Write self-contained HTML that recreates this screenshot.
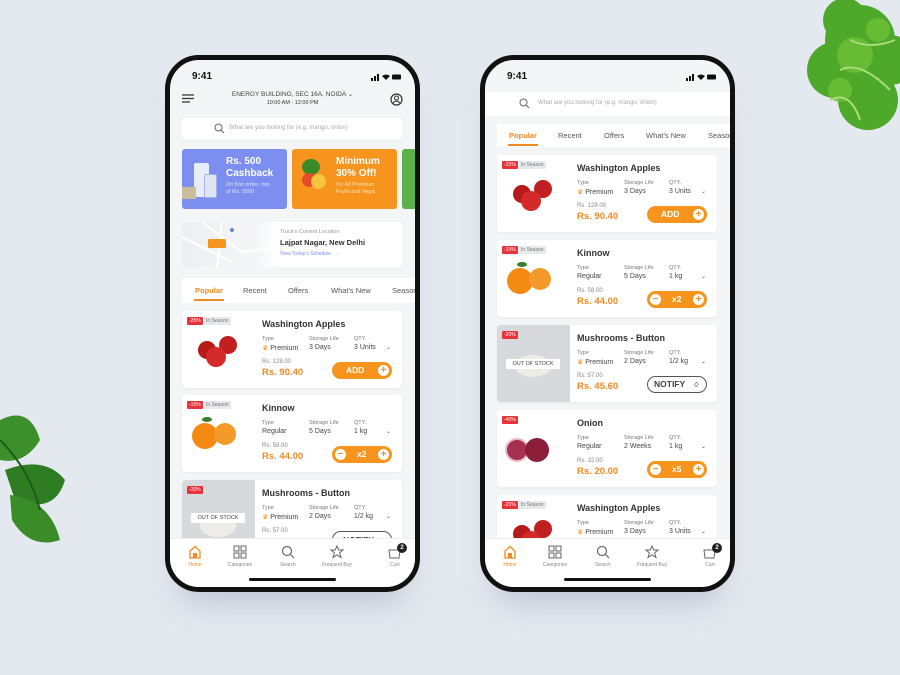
<!DOCTYPE html>
<html><head><meta charset="utf-8"><style>
*{margin:0;padding:0;box-sizing:border-box}
body{width:900px;height:675px;background:#e4e8ef;position:relative;overflow:hidden;font-family:"Liberation Sans",sans-serif;color:#333}
.ab{position:absolute}
.phone{position:absolute;top:55px;width:255px;height:537px;border:5px solid #111;border-radius:34px;background:#f4f5f7;overflow:hidden;box-shadow:0 25px 30px -15px rgba(120,130,160,.35)}
.time{position:absolute;left:22px;top:11px;font-size:10px;font-weight:bold;color:#111}
.stat{position:absolute;right:14px;top:13px;display:flex;gap:3px;align-items:flex-end}
.card{position:absolute;left:12px;width:220px;height:77px;background:#fff;border-radius:4px;box-shadow:0 1px 3px rgba(0,0,0,.05);overflow:hidden}
.bd{position:absolute;top:6px;height:8px;font-size:5px;line-height:8px;padding:0 2px;border-radius:1px}
.red{background:#e8333a;color:#fff;left:5px}
.gr{background:#e6e8ec;color:#777;left:22px}
.tt{position:absolute;left:80px;top:8px;font-size:9px;font-weight:bold;color:#333}
.lb{position:absolute;top:25px;font-size:5.5px;color:#777}
.vl{position:absolute;top:33px;font-size:7px;color:#444}
.op{position:absolute;left:80px;top:48px;font-size:6px;color:#888}
.np{position:absolute;left:80px;top:56px;font-size:9.5px;font-weight:bold;color:#f08a24}
.btn{position:absolute;left:150px;top:51px;width:60px;height:17px;border-radius:9px;background:#f7941d;color:#fff;font-size:8.5px;font-weight:bold;line-height:17px}
.pl{position:absolute;top:2px;width:13px;height:13px;border-radius:50%;background:#fff;color:#f7941d;font-size:10px;line-height:12px;text-align:center;border:1px solid #f7941d}
.chev{position:absolute;left:204px;top:33px;font-size:6px;color:#555}
.ball{position:absolute;border-radius:50%}
.nav{position:absolute;left:0;top:478px;width:245px;height:50px;background:#fff;border-top:1px solid #eee}
.ni{position:absolute;top:6px;width:40px;text-align:center;font-size:5px;color:#888}
.ni svg{display:block;margin:0 auto 3px}
.hb{position:absolute;left:79px;top:39px;width:87px;height:3px;border-radius:2px;background:#111}
.tabs{position:absolute;left:12px;background:#fff;height:25px;width:240px;font-size:7.5px;color:#555}
.tabs span{position:absolute;top:8px}
</style></head><body>

<!-- lettuce -->
<svg class="ab" style="left:800px;top:0" width="100" height="140"><g fill="#4ea82a"><circle cx="60" cy="40" r="35"/><circle cx="35" cy="70" r="28"/><circle cx="68" cy="100" r="30"/><circle cx="90" cy="60" r="25"/><circle cx="45" cy="20" r="22"/></g><g fill="#6ec236" opacity=".8"><circle cx="55" cy="55" r="18"/><circle cx="78" cy="30" r="12"/><circle cx="40" cy="90" r="12"/></g><path d="M40 70 Q60 60 90 90 M50 40 Q70 50 95 40 M30 100 Q50 90 60 120" stroke="#a8dc7a" stroke-width="2" fill="none"/></svg>
<!-- basil -->
<svg class="ab" style="left:0;top:400px" width="75" height="150"><path d="M0 20 Q30 5 40 40 Q25 65 0 60Z" fill="#3c8f2a"/><path d="M5 70 Q45 55 65 80 Q55 115 15 100Z" fill="#2f7d22"/><path d="M10 95 Q50 100 60 140 Q30 150 12 120Z" fill="#3a8c28"/><path d="M0 40 Q30 70 40 110" stroke="#1f5a18" stroke-width="2" fill="none"/></svg>

<!-- LEFT PHONE -->
<div class="phone" style="left:165px">
 <div class="time">9:41</div>
 <div class="stat"><svg width="30" height="8"><rect x="0" y="5" width="2" height="3" fill="#111"/><rect x="3" y="3" width="2" height="5" fill="#111"/><rect x="6" y="1" width="2" height="7" fill="#111"/><path d="M11 3 Q15 0 19 3 L15 7Z" fill="#111"/><rect x="21" y="1.5" width="9" height="5" rx="1" fill="#111"/></svg></div>
 <svg class="ab" style="left:12px;top:34px" width="12" height="9"><path d="M0 1H12M0 4.5H12M0 8H8" stroke="#333" stroke-width="1.3"/></svg>
 <div class="ab" style="left:0;width:245px;top:30px;text-align:center;font-size:6.5px;color:#444">ENERGY BUILDING, SEC 16A, NOIDA ⌄</div>
 <div class="ab" style="left:0;width:245px;top:40px;text-align:center;font-size:5.5px;color:#333">10:00 AM - 12:00 PM</div>
 <svg class="ab" style="left:220px;top:33px" width="13" height="13"><circle cx="6.5" cy="6.5" r="5.5" fill="none" stroke="#333" stroke-width="1.2"/><circle cx="6.5" cy="5" r="2" fill="none" stroke="#333"/><path d="M3 10Q6.5 6 10 10" fill="none" stroke="#333"/></svg>
 <div class="ab" style="left:12px;top:58px;width:220px;height:21px;background:#fff;border-radius:3px"></div>
 <svg class="ab" style="left:44px;top:63px" width="11" height="11"><circle cx="4.5" cy="4.5" r="3.5" fill="none" stroke="#666"/><path d="M7 7L10 10" stroke="#666"/></svg>
 <div class="ab" style="left:59px;top:65px;font-size:6px;color:#aaa">What are you looking for (e.g. mango, onion)</div>
 <div class="ab" style="left:12px;top:89px;width:105px;height:60px;background:#7c8ff0;border-radius:3px;overflow:hidden">
  <div class="ab" style="left:12px;top:14px;width:15px;height:34px;background:#e8ebf8;border-radius:2px"></div>
  <div class="ab" style="left:22px;top:25px;width:13px;height:24px;background:#dfe5f5;border:1px solid #a8b4e6;border-radius:2px"></div>
  <div class="ab" style="left:0;top:38px;width:14px;height:12px;background:#cbbd9a"></div>
  <div class="ab" style="left:44px;top:7px;font-size:10px;font-weight:bold;color:#fff;line-height:12px">Rs. 500<br>Cashback</div>
  <div class="ab" style="left:44px;top:33px;font-size:5.5px;color:#dfe3ff;line-height:7px">On first order, min<br>of Rs. 2500</div>
 </div>
 <div class="ab" style="left:122px;top:89px;width:105px;height:60px;background:#f7941d;border-radius:3px;overflow:hidden">
  <div class="ball" style="left:10px;top:10px;width:18px;height:16px;background:#3b8a2a"></div>
  <div class="ball" style="left:10px;top:24px;width:14px;height:14px;background:#e54b2b"></div>
  <div class="ball" style="left:19px;top:25px;width:15px;height:15px;background:#f6c53b"></div>
  <div class="ab" style="left:44px;top:7px;font-size:10px;font-weight:bold;color:#fff;line-height:12px">Minimum<br>30% Off!</div>
  <div class="ab" style="left:44px;top:33px;font-size:5.5px;color:#ffe0b8;line-height:7px">On All Premium<br>Fruits and Vegis</div>
 </div>
 <div class="ab" style="left:232px;top:89px;width:20px;height:60px;background:#59b34a;border-radius:3px"></div>
 <div class="ab" style="left:12px;top:162px;width:220px;height:45px;background:#fff;border-radius:3px;overflow:hidden">
  <div class="ab" style="left:0;top:0;width:95px;height:45px;background:linear-gradient(90deg,#eceef1,#f5f6f8 80%,#fff)"></div>
  <svg class="ab" style="left:0;top:0" width="95" height="45"><path d="M20 0 L60 30 L95 25 M0 15 L50 40 M40 0 L35 45" stroke="#fff" stroke-width="2" fill="none"/><circle cx="50" cy="8" r="2" fill="#6a7fd0"/></svg>
  <div class="ab" style="left:26px;top:17px;width:18px;height:9px;background:#f7941d;border-radius:1px"></div>
  <div class="ab" style="left:98px;top:7px;font-size:5.5px;color:#999">Truck's Current Location</div>
  <div class="ab" style="left:98px;top:16px;font-size:7.5px;font-weight:bold;color:#333">Lajpat Nagar, New Delhi</div>
  <div class="ab" style="left:98px;top:29px;font-size:5px;color:#7c8ff0">View Today's Schedule &nbsp;→</div>
 </div>
 <div class="tabs" style="top:218px"><span style="left:13px;color:#f08a24;font-weight:bold">Popular</span><span style="left:61px">Recent</span><span style="left:106px">Offers</span><span style="left:149px">What's New</span><span style="left:210px">Seasonal</span><div class="ab" style="left:12px;top:21px;width:30px;height:2px;background:#f08a24"></div></div>

 <div class="card" style="top:251px">
  <div class="bd red">-25%</div><div class="bd gr">In Season</div>
  <div class="ball" style="left:16px;top:30px;width:18px;height:18px;background:#b81a1a"></div><div class="ball" style="left:37px;top:25px;width:18px;height:18px;background:#c0201f"></div><div class="ball" style="left:24px;top:36px;width:20px;height:20px;background:#d42a2a"></div>
  <div class="tt">Washington Apples</div>
  <div class="lb" style="left:80px">Type</div><div class="lb" style="left:127px">Storage Life</div><div class="lb" style="left:172px">QTY.</div>
  <div class="vl" style="left:80px"><span style="color:#f7941d">♛</span> Premium</div><div class="vl" style="left:127px">3 Days</div><div class="vl" style="left:172px">3 Units</div><div class="chev">⌄</div>
  <div class="op">Rs. 128.00</div><div class="np">Rs. 90.40</div>
  <div class="btn"><span style="margin-left:14px">ADD</span><div class="pl" style="right:2px">+</div></div>
 </div>
 <div class="card" style="top:335px">
  <div class="bd red">-15%</div><div class="bd gr">In Season</div>
  <div class="ball" style="left:10px;top:28px;width:26px;height:26px;background:#f48a12"></div><div class="ball" style="left:32px;top:28px;width:22px;height:22px;background:#f49a2a"></div><div class="ab" style="left:20px;top:22px;width:10px;height:5px;background:#3a7f2a;border-radius:50%"></div>
  <div class="tt">Kinnow</div>
  <div class="lb" style="left:80px">Type</div><div class="lb" style="left:127px">Storage Life</div><div class="lb" style="left:172px">QTY.</div>
  <div class="vl" style="left:80px">Regular</div><div class="vl" style="left:127px">5 Days</div><div class="vl" style="left:172px">1 kg</div><div class="chev">⌄</div>
  <div class="op">Rs. 58.00</div><div class="np">Rs. 44.00</div>
  <div class="btn"><div class="pl" style="left:2px">−</div><span style="margin-left:25px">x2</span><div class="pl" style="right:2px">+</div></div>
 </div>
 <div class="card" style="top:420px">
  <div class="ab" style="left:0;top:0;width:73px;height:77px;background:#d8d9dc"></div>
  <div class="ball" style="left:18px;top:35px;width:36px;height:22px;background:#eeece6"></div>
  <div class="bd red">-20%</div>
  <div class="ab" style="left:9px;top:33px;width:54px;height:10px;background:#fff;font-size:5.5px;text-align:center;line-height:10px;color:#444;border-radius:1px">OUT OF STOCK</div>
  <div class="tt">Mushrooms - Button</div>
  <div class="lb" style="left:80px">Type</div><div class="lb" style="left:127px">Storage Life</div><div class="lb" style="left:172px">QTY.</div>
  <div class="vl" style="left:80px"><span style="color:#f7941d">♛</span> Premium</div><div class="vl" style="left:127px">2 Days</div><div class="vl" style="left:172px">1/2 kg</div><div class="chev">⌄</div>
  <div class="op">Rs. 57.00</div>
  <div class="btn" style="background:#fff;border:1px solid #555;color:#444;padding-left:10px">NOTIFY</div>
 </div>
 <div class="nav">
  <div class="ni" style="left:5px;color:#f08a24"><svg width="14" height="14"><path d="M2 6L7 1.5L12 6V13H2Z" fill="none" stroke="#f08a24" stroke-width="1.3"/><rect x="5" y="8" width="4" height="5" fill="#f08a24"/></svg>Home</div>
  <div class="ni" style="left:50px"><svg width="14" height="14"><g fill="none" stroke="#666"><rect x="1" y="1" width="5" height="5"/><rect x="8" y="1" width="5" height="5"/><rect x="1" y="8" width="5" height="5"/><rect x="8" y="8" width="5" height="5"/></g></svg>Categories</div>
  <div class="ni" style="left:98px"><svg width="14" height="14"><circle cx="6" cy="6" r="4.5" fill="none" stroke="#666" stroke-width="1.2"/><path d="M9.5 9.5L13 13" stroke="#666" stroke-width="1.2"/></svg>Search</div>
  <div class="ni" style="left:147px"><svg width="14" height="14"><path d="M7 1L8.8 5H13L9.6 7.8L11 12.5L7 9.8L3 12.5L4.4 7.8L1 5H5.2Z" fill="none" stroke="#666"/></svg>Frequent Buy</div>
  <div class="ni" style="left:205px"><svg width="14" height="14"><path d="M1 5H12L11 13H2Z" fill="none" stroke="#666"/></svg>Cart</div>
  <div class="ab" style="left:227px;top:4px;width:10px;height:10px;border-radius:50%;background:#222;color:#fff;font-size:6px;text-align:center;line-height:10px;font-weight:bold">2</div>
  <div class="hb"></div>
 </div>
</div>

<!-- RIGHT PHONE -->
<div class="phone" style="left:480px">
 <div class="time">9:41</div>
 <div class="stat"><svg width="30" height="8"><rect x="0" y="5" width="2" height="3" fill="#111"/><rect x="3" y="3" width="2" height="5" fill="#111"/><rect x="6" y="1" width="2" height="7" fill="#111"/><path d="M11 3 Q15 0 19 3 L15 7Z" fill="#111"/><rect x="21" y="1.5" width="9" height="5" rx="1" fill="#111"/></svg></div>
 <div class="ab" style="left:0;top:32px;width:245px;height:24px;background:#fff"></div>
 <svg class="ab" style="left:34px;top:38px" width="11" height="11"><circle cx="4.5" cy="4.5" r="3.5" fill="none" stroke="#666"/><path d="M7 7L10 10" stroke="#666"/></svg>
 <div class="ab" style="left:53px;top:40px;font-size:6px;color:#aaa">What are you looking for (e.g. mango, onion)</div>
 <div class="tabs" style="top:64px;height:23px"><span style="left:12px;color:#f08a24;font-weight:bold;top:7px">Popular</span><span style="left:61px;top:7px">Recent</span><span style="left:107px;top:7px">Offers</span><span style="left:149px;top:7px">What's New</span><span style="left:211px;top:7px">Seasonal</span><div class="ab" style="left:11px;top:20px;width:30px;height:2px;background:#f08a24"></div></div>

 <div class="card" style="top:95px">
  <div class="bd red">-25%</div><div class="bd gr">In Season</div>
  <div class="ball" style="left:16px;top:30px;width:18px;height:18px;background:#b81a1a"></div><div class="ball" style="left:37px;top:25px;width:18px;height:18px;background:#c0201f"></div><div class="ball" style="left:24px;top:36px;width:20px;height:20px;background:#d42a2a"></div>
  <div class="tt">Washington Apples</div>
  <div class="lb" style="left:80px">Type</div><div class="lb" style="left:127px">Storage Life</div><div class="lb" style="left:172px">QTY.</div>
  <div class="vl" style="left:80px"><span style="color:#f7941d">♛</span> Premium</div><div class="vl" style="left:127px">3 Days</div><div class="vl" style="left:172px">3 Units</div><div class="chev">⌄</div>
  <div class="op">Rs. 128.00</div><div class="np">Rs. 90.40</div>
  <div class="btn"><span style="margin-left:14px">ADD</span><div class="pl" style="right:2px">+</div></div>
 </div>
 <div class="card" style="top:180px">
  <div class="bd red">-15%</div><div class="bd gr">In Season</div>
  <div class="ball" style="left:10px;top:28px;width:26px;height:26px;background:#f48a12"></div><div class="ball" style="left:32px;top:28px;width:22px;height:22px;background:#f49a2a"></div><div class="ab" style="left:20px;top:22px;width:10px;height:5px;background:#3a7f2a;border-radius:50%"></div>
  <div class="tt">Kinnow</div>
  <div class="lb" style="left:80px">Type</div><div class="lb" style="left:127px">Storage Life</div><div class="lb" style="left:172px">QTY.</div>
  <div class="vl" style="left:80px">Regular</div><div class="vl" style="left:127px">5 Days</div><div class="vl" style="left:172px">1 kg</div><div class="chev">⌄</div>
  <div class="op">Rs. 58.00</div><div class="np">Rs. 44.00</div>
  <div class="btn"><div class="pl" style="left:2px">−</div><span style="margin-left:25px">x2</span><div class="pl" style="right:2px">+</div></div>
 </div>
 <div class="card" style="top:265px">
  <div class="ab" style="left:0;top:0;width:73px;height:77px;background:#d8d9dc"></div>
  <div class="ball" style="left:18px;top:30px;width:36px;height:22px;background:#eeece6"></div>
  <div class="bd red">-20%</div>
  <div class="ab" style="left:9px;top:34px;width:54px;height:10px;background:#fff;font-size:5.5px;text-align:center;line-height:10px;color:#444;border-radius:1px">OUT OF STOCK</div>
  <div class="tt">Mushrooms - Button</div>
  <div class="lb" style="left:80px">Type</div><div class="lb" style="left:127px">Storage Life</div><div class="lb" style="left:172px">QTY.</div>
  <div class="vl" style="left:80px"><span style="color:#f7941d">♛</span> Premium</div><div class="vl" style="left:127px">2 Days</div><div class="vl" style="left:172px">1/2 kg</div><div class="chev">⌄</div>
  <div class="op">Rs. 57.00</div><div class="np">Rs. 45.60</div>
  <div class="btn" style="background:#fff;border:1px solid #555;color:#444;line-height:15px;padding-left:6px">NOTIFY <span style="font-size:7px;margin-left:6px">♢</span></div>
 </div>
 <div class="card" style="top:350px">
  <div class="bd red">-40%</div>
  <div class="ball" style="left:8px;top:28px;width:24px;height:24px;background:#a5304f;border:2px solid #e9b8c8"></div><div class="ball" style="left:28px;top:28px;width:24px;height:24px;background:#8c1e3a"></div>
  <div class="tt">Onion</div>
  <div class="lb" style="left:80px">Type</div><div class="lb" style="left:127px">Storage Life</div><div class="lb" style="left:172px">QTY.</div>
  <div class="vl" style="left:80px">Regular</div><div class="vl" style="left:127px">2 Weeks</div><div class="vl" style="left:172px">1 kg</div><div class="chev">⌄</div>
  <div class="op">Rs. 32.00</div><div class="np">Rs. 20.00</div>
  <div class="btn"><div class="pl" style="left:2px">−</div><span style="margin-left:25px">x5</span><div class="pl" style="right:2px">+</div></div>
 </div>
 <div class="card" style="top:435px">
  <div class="bd red">-25%</div><div class="bd gr">In Season</div>
  <div class="ball" style="left:16px;top:30px;width:18px;height:18px;background:#b81a1a"></div><div class="ball" style="left:37px;top:25px;width:18px;height:18px;background:#c0201f"></div><div class="ball" style="left:24px;top:36px;width:20px;height:20px;background:#d42a2a"></div>
  <div class="tt">Washington Apples</div>
  <div class="lb" style="left:80px">Type</div><div class="lb" style="left:127px">Storage Life</div><div class="lb" style="left:172px">QTY.</div>
  <div class="vl" style="left:80px"><span style="color:#f7941d">♛</span> Premium</div><div class="vl" style="left:127px">3 Days</div><div class="vl" style="left:172px">3 Units</div><div class="chev">⌄</div>
 </div>
 <div class="nav">
  <div class="ni" style="left:5px;color:#f08a24"><svg width="14" height="14"><path d="M2 6L7 1.5L12 6V13H2Z" fill="none" stroke="#f08a24" stroke-width="1.3"/><rect x="5" y="8" width="4" height="5" fill="#f08a24"/></svg>Home</div>
  <div class="ni" style="left:50px"><svg width="14" height="14"><g fill="none" stroke="#666"><rect x="1" y="1" width="5" height="5"/><rect x="8" y="1" width="5" height="5"/><rect x="1" y="8" width="5" height="5"/><rect x="8" y="8" width="5" height="5"/></g></svg>Categories</div>
  <div class="ni" style="left:98px"><svg width="14" height="14"><circle cx="6" cy="6" r="4.5" fill="none" stroke="#666" stroke-width="1.2"/><path d="M9.5 9.5L13 13" stroke="#666" stroke-width="1.2"/></svg>Search</div>
  <div class="ni" style="left:147px"><svg width="14" height="14"><path d="M7 1L8.8 5H13L9.6 7.8L11 12.5L7 9.8L3 12.5L4.4 7.8L1 5H5.2Z" fill="none" stroke="#666"/></svg>Frequent Buy</div>
  <div class="ni" style="left:205px"><svg width="14" height="14"><path d="M1 5H12L11 13H2Z" fill="none" stroke="#666"/></svg>Cart</div>
  <div class="ab" style="left:227px;top:4px;width:10px;height:10px;border-radius:50%;background:#222;color:#fff;font-size:6px;text-align:center;line-height:10px;font-weight:bold">2</div>
  <div class="hb"></div>
 </div>
</div>
</body></html>
